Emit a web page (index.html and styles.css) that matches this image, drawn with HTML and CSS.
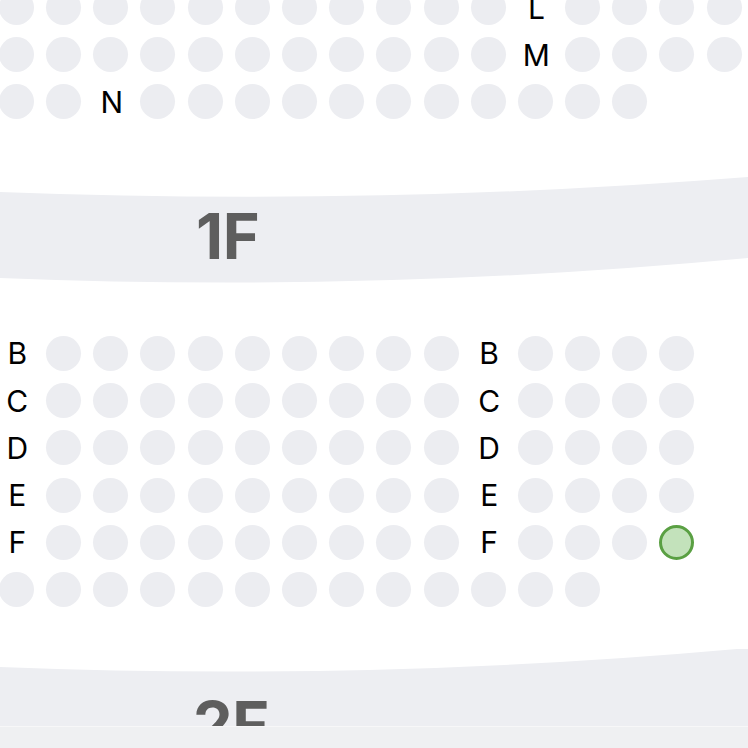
FILE: index.html
```html
<!DOCTYPE html>
<html>
<head>
<meta charset="utf-8">
<link rel="stylesheet" href="styles.css">
</head>
<body>
<main class="hall">
  <section class="block block-top">
    <div class="seat"></div><div class="seat"></div><div class="seat"></div><div class="seat"></div><div class="seat"></div><div class="seat"></div><div class="seat"></div><div class="seat"></div><div class="seat"></div><div class="seat"></div><div class="seat"></div><div class="label">L</div><div class="seat"></div><div class="seat"></div><div class="seat"></div><div class="seat"></div>
    <div class="seat"></div><div class="seat"></div><div class="seat"></div><div class="seat"></div><div class="seat"></div><div class="seat"></div><div class="seat"></div><div class="seat"></div><div class="seat"></div><div class="seat"></div><div class="seat"></div><div class="label">M</div><div class="seat"></div><div class="seat"></div><div class="seat"></div><div class="seat"></div>
    <div class="seat"></div><div class="seat"></div><div class="label">N</div><div class="seat"></div><div class="seat"></div><div class="seat"></div><div class="seat"></div><div class="seat"></div><div class="seat"></div><div class="seat"></div><div class="seat"></div><div class="seat"></div><div class="seat"></div><div class="seat"></div><div class="empty"></div><div class="empty"></div>
  </section>

  <div class="floor floor-1">
    <svg class="floor-bg" viewBox="0 0 748 120" preserveAspectRatio="none" aria-hidden="true">
      <path d="M0 17 Q374 31.5 748 2 L748 83 Q374 118.2 0 103 Z" fill="#EDEEF2"/>
    </svg>
    <span class="floor-name">1F</span>
  </div>

  <section class="block block-bottom">
    <div class="label">B</div><div class="seat"></div><div class="seat"></div><div class="seat"></div><div class="seat"></div><div class="seat"></div><div class="seat"></div><div class="seat"></div><div class="seat"></div><div class="seat"></div><div class="label">B</div><div class="seat"></div><div class="seat"></div><div class="seat"></div><div class="seat"></div><div class="empty"></div>
    <div class="label">C</div><div class="seat"></div><div class="seat"></div><div class="seat"></div><div class="seat"></div><div class="seat"></div><div class="seat"></div><div class="seat"></div><div class="seat"></div><div class="seat"></div><div class="label">C</div><div class="seat"></div><div class="seat"></div><div class="seat"></div><div class="seat"></div><div class="empty"></div>
    <div class="label">D</div><div class="seat"></div><div class="seat"></div><div class="seat"></div><div class="seat"></div><div class="seat"></div><div class="seat"></div><div class="seat"></div><div class="seat"></div><div class="seat"></div><div class="label">D</div><div class="seat"></div><div class="seat"></div><div class="seat"></div><div class="seat"></div><div class="empty"></div>
    <div class="label">E</div><div class="seat"></div><div class="seat"></div><div class="seat"></div><div class="seat"></div><div class="seat"></div><div class="seat"></div><div class="seat"></div><div class="seat"></div><div class="seat"></div><div class="label">E</div><div class="seat"></div><div class="seat"></div><div class="seat"></div><div class="seat"></div><div class="empty"></div>
    <div class="label">F</div><div class="seat"></div><div class="seat"></div><div class="seat"></div><div class="seat"></div><div class="seat"></div><div class="seat"></div><div class="seat"></div><div class="seat"></div><div class="seat"></div><div class="label">F</div><div class="seat"></div><div class="seat"></div><div class="seat"></div><div class="seat selected"></div><div class="empty"></div>
    <div class="seat"></div><div class="seat"></div><div class="seat"></div><div class="seat"></div><div class="seat"></div><div class="seat"></div><div class="seat"></div><div class="seat"></div><div class="seat"></div><div class="seat"></div><div class="seat"></div><div class="seat"></div><div class="seat"></div><div class="empty"></div><div class="empty"></div><div class="empty"></div>
  </section>

  <div class="floor floor-2">
    <svg class="floor-bg" viewBox="0 0 748 120" preserveAspectRatio="none" aria-hidden="true">
      <path d="M0 18 Q374 33 748 -1 L748 84 Q374 119 0 104 Z" fill="#EDEEF2"/>
    </svg>
    <span class="floor-name floor-name-2">2F</span>
  </div>
</main>
<footer class="bottom-bar"></footer>
</body>
</html>
```

FILE: styles.css
```css
html, body {
  margin: 0;
  padding: 0;
  background: #ffffff;
  overflow: hidden;
  width: 748px;
  height: 748px;
}

.hall {
  display: flex;
  flex-direction: column;
  font-family: Inter, "Liberation Sans", sans-serif;
}

.block {
  display: grid;
  grid-template-columns: repeat(16, 35px);
  grid-auto-rows: 35px;
  column-gap: 12.2px;
  row-gap: 12.2px;
  margin-left: -1.2px;
}

.block-top {
  margin-top: -10px;
}

.block-bottom {
  margin-top: 41px;
}

.seat {
  width: 35px;
  height: 35px;
  border-radius: 50%;
  background: #ECEDF1;
  box-sizing: border-box;
}

.seat.selected {
  background: #C3E2BB;
  border: 3px solid #5AA043;
}

.label {
  display: flex;
  align-items: center;
  justify-content: center;
  padding-left: 2px;
  font-size: 30px;
  font-weight: 400;
  color: #000000;
  line-height: 1;
}

.floor {
  position: relative;
  height: 120px;
  box-sizing: border-box;
}

.floor-1 {
  margin-top: 55.6px;
}

.floor-2 {
  margin-top: 42px;
}

.floor-bg {
  position: absolute;
  inset: 0;
  width: 100%;
  height: 100%;
}

.floor-name {
  position: relative;
  display: block;
  padding-left: 196px;
  padding-top: 30px;
  font-size: 63px;
  font-weight: 700;
  line-height: 1;
  color: #5E5E5E;
  letter-spacing: -0.5px;
}

.floor-name-2 {
  padding-top: 44px;
  padding-left: 193px;
}

.bottom-bar {
  position: fixed;
  left: 0;
  right: 0;
  bottom: 0;
  height: 21px;
  background: #EFF0F2;
  border-top: 1px solid #F7F7F8;
}
```
